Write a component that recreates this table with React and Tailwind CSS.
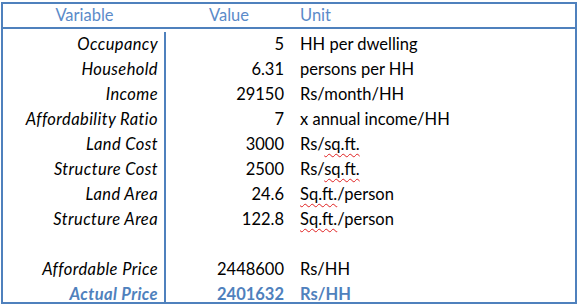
import React from "react";

const rows = [
  ["Occupancy", "5", "HH per dwelling"],
  ["Household", "6.31", "persons per HH"],
  ["Income", "29150", "Rs/month/HH"],
  ["Affordability Ratio", "7", "x annual income/HH"],
  ["Land Cost", "3000", "cost"],
  ["Structure Cost", "2500", "cost"],
  ["Land Area", "24.6", "area"],
  ["Structure Area", "122.8", "area"],
  ["", "", ""],
  ["Affordable Price", "2448600", "Rs/HH"],
];

const wavy = "underline decoration-wavy decoration-[#e02020] decoration-1 underline-offset-[3px]";

function Unit({ u }) {
  if (u === "cost")
    return (
      <span>
        Rs/<span className={wavy}>sq.ft.</span>
      </span>
    );
  if (u === "area")
    return (
      <span>
        <span className={wavy}>Sq.ft.</span>/person
      </span>
    );
  return <span>{u}</span>;
}

export default function App() {
  return (
    <div
      className="bg-white w-[577px] h-[305px] pt-[2px] pl-px text-[#000] text-[16.5px]"
      style={{ fontFamily: "Lato, 'Open Sans', sans-serif" }}
    >
      <div className="w-[576px] h-[302px] border-2 border-[#4F81BD] flex flex-col overflow-hidden">
        <div className="flex h-[25px] border-b-2 border-[#4F81BD] text-[#5B8BC9] leading-[23px] shrink-0">
          <div className="w-[163px] text-center">Variable</div>
          <div className="w-[126px] text-center">Value</div>
          <div className="pl-[8px]">Unit</div>
        </div>
        <div className="grid grid-cols-[163px_126px_1fr] auto-rows-[25px] leading-[25px] pt-[3px] flex-1">
          {rows.map((r, i) => (
            <React.Fragment key={i}>
              <div className="border-r-2 border-[#4F81BD] text-right pr-[6px] italic tracking-[0.4px] whitespace-nowrap">{r[0]}</div>
              <div className="text-right pr-[8px]">{r[1]}</div>
              <div className="pl-[8px] whitespace-nowrap">
                <Unit u={r[2]} />
              </div>
            </React.Fragment>
          ))}
          <div className="border-r-2 border-[#4F81BD] text-right pr-[6px] italic tracking-[0.4px] font-bold text-[#4F81BD]">Actual Price</div>
          <div className="text-right pr-[8px] font-bold text-[#4F81BD]">2401632</div>
          <div className="pl-[8px] font-bold text-[#4F81BD]">Rs/HH</div>
          <div className="border-r-2 border-[#4F81BD]"></div>
        </div>
      </div>
    </div>
  );
}
